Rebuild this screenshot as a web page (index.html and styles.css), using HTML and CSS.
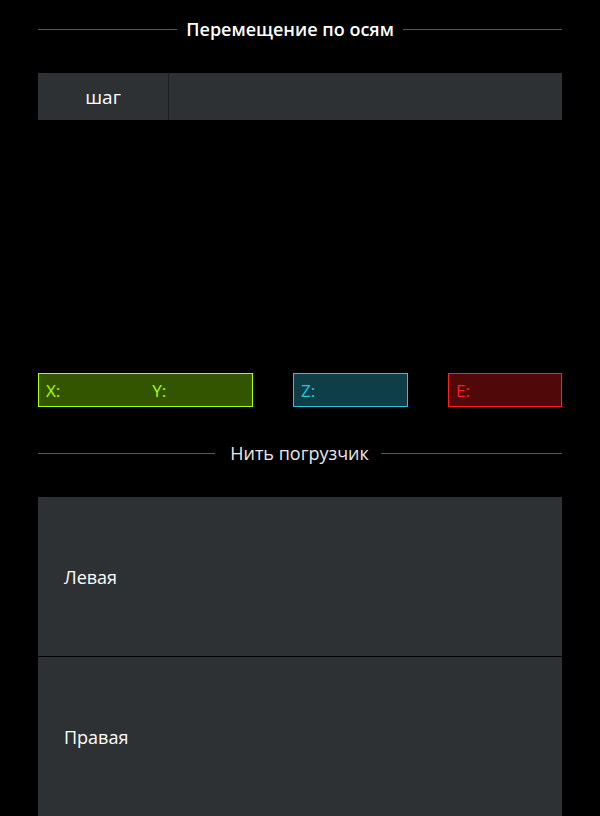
FILE: index.html
```html
<!DOCTYPE html>
<html lang="ru">
<head>
<meta charset="utf-8">
<link rel="stylesheet" href="styles.css">
</head>
<body>
<div class="page">
  <div class="divider bold"><span class="line left"></span><span class="dtext">Перемещение по осям</span><span class="line right"></span></div>
  <div class="step">
    <div class="step-label">шаг</div>
    <div class="step-value"></div>
  </div>
  <div class="axes">
    <div class="axis xy"><span class="ax">X:</span><span class="ax ay">Y:</span></div>
    <div class="axis z"><span class="ax">Z:</span></div>
    <div class="axis e"><span class="ax">E:</span></div>
  </div>
  <div class="divider second"><span class="line left"></span><span class="dtext">Нить погрузчик</span><span class="line right"></span></div>
  <div class="buttons">
    <div class="btn">Левая</div>
    <div class="btn">Правая</div>
  </div>
</div>
</body>
</html>
```
FILE: styles.css
```css
html, body {
  margin: 0;
  padding: 0;
  background: #000;
  height: 816px;
  overflow: hidden;
}
.page {
  padding: 18px 38px 0;
  font-family: "Open Sans", "Noto Sans", sans-serif;
  color: #fff;
  display: flex;
  flex-direction: column;
}
.divider {
  display: flex;
  align-items: center;
  height: 22px;
}
.divider .line {
  height: 1px;
  background: #5a5a5a;
}
.divider .dtext {
  font-size: 18px;
  line-height: 22px;
  margin: 0 9px;
}
.divider.bold .line.left {
  flex: 140;
}
.divider.bold .line.right {
  flex: 160;
}
.divider.bold .dtext {
  font-weight: 600;
}
.divider.second {
  margin-top: 35px;
}
.divider.second .dtext {
  color: #e8e8e8;
  margin: 0 12px 0 15px;
}
.divider.second .line.left {
  flex: 177;
}
.divider.second .line.right {
  flex: 181;
}
.step {
  margin-top: 33px;
  height: 47px;
  display: flex;
  background: #2e3134;
}
.step-label {
  width: 130px;
  border-right: 1px solid #1c1e20;
  display: flex;
  align-items: center;
  justify-content: center;
  font-size: 19px;
}
.step-value {
  flex: 1;
}
.axes {
  margin-top: 253px;
  display: flex;
  justify-content: space-between;
  height: 34px;
}
.axis {
  box-sizing: border-box;
  border: 1px solid;
  display: flex;
  align-items: center;
  padding-left: 7px;
  font-size: 17px;
}
.axis.xy {
  width: 215px;
  border-color: #aaff00;
  background: #335500;
  color: #aaff00;
}
.axis .ay {
  margin-left: 92px;
}
.axis.z {
  width: 115px;
  border-color: #22c8dd;
  background: #0e3f48;
  color: #22c8dd;
}
.axis.e {
  width: 114px;
  border-color: #ff2020;
  background: #500808;
  color: #ff2020;
}
.buttons {
  margin-top: 33px;
  display: flex;
  flex-direction: column;
  gap: 1px;
}
.btn {
  height: 159px;
  background: #2e3134;
  display: flex;
  align-items: center;
  padding-left: 26px;
  font-size: 18px;
}
```
